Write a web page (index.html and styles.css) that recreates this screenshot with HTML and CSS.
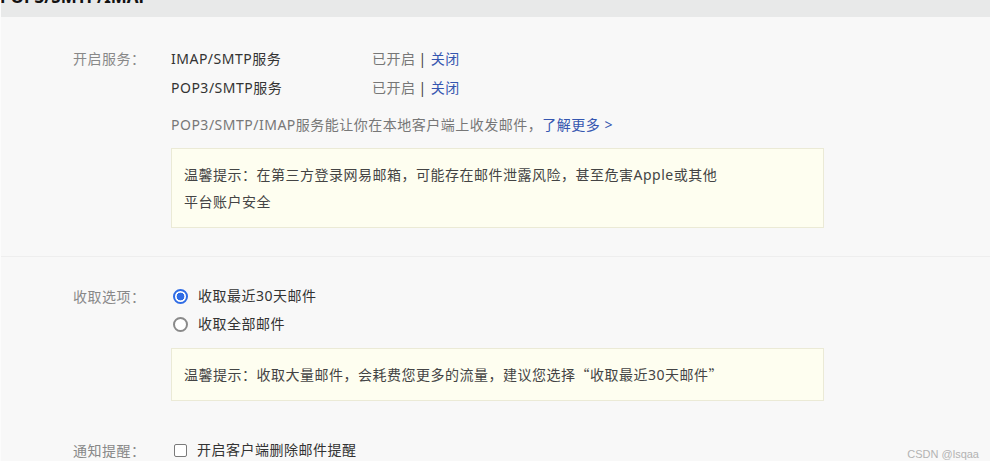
FILE: index.html
```html
<!DOCTYPE html>
<html lang="zh-CN">
<head>
    <meta charset="UTF-8">
    <title>POP3/SMTP/IMAP</title>
    <link rel="stylesheet" href="styles.css">
</head>
<body>
    <div class="page">
        <div class="head-bar">
            <h3 class="head-title">POP3/SMTP/IMAP</h3>
        </div>

        <div class="section section-service">
            <div class="row">
                <div class="row-label">开启服务：</div>
                <div class="row-body">
                    <div class="service-line">
                        <span class="service-name">IMAP/SMTP服务</span>
                        <span class="service-state">已开启<i class="sep">|</i><a href="#">关闭</a></span>
                    </div>
                    <div class="service-line">
                        <span class="service-name">POP3/SMTP服务</span>
                        <span class="service-state">已开启<i class="sep">|</i><a href="#">关闭</a></span>
                    </div>
                    <p class="service-desc">POP3/SMTP/IMAP服务能让你在本地客户端上收发邮件，<a href="#">了解更多 &gt;</a></p>
                    <div class="tip-box">
                        温馨提示：在第三方登录网易邮箱，可能存在邮件泄露风险，甚至危害Apple或其他<br>平台账户安全
                    </div>
                </div>
            </div>
        </div>

        <div class="section section-fetch">
            <div class="row">
                <div class="row-label">收取选项：</div>
                <div class="row-body">
                    <label class="option">
                        <span class="radio checked"></span>收取最近30天邮件
                    </label>
                    <label class="option">
                        <span class="radio"></span>收取全部邮件
                    </label>
                    <div class="tip-box tip-short">
                        温馨提示：收取大量邮件，会耗费您更多的流量，建议您选择<span class="cjk">“</span>收取最近30天邮件<span class="cjk">”</span>
                    </div>
                </div>
            </div>

            <div class="row row-notify">
                <div class="row-label">通知提醒：</div>
                <div class="row-body">
                    <label class="option">
                        <span class="checkbox"></span>开启客户端删除邮件提醒
                    </label>
                </div>
            </div>
        </div>

        <div class="watermark">CSDN @lsqaa</div>
    </div>
</body>
</html>
```

FILE: styles.css
```css
html, body {
    margin: 0;
    padding: 0;
}
body {
    background: #f8f8f8;
    font-family: "Noto Sans", "Noto Sans CJK SC", sans-serif;
    font-size: 14px;
    letter-spacing: 0.5px;
    color: #333;
    overflow: hidden;
}
a {
    color: #3556b0;
    text-decoration: none;
}
.cjk {
    font-family: "Noto Sans CJK SC", sans-serif;
}

.page {
    position: relative;
    width: 990px;
    height: 461px;
    overflow: hidden;
    border-left: 1px solid #fcfcfc;
    box-sizing: border-box;
}

.head-bar {
    height: 17px;
    background: #e8e9e9;
    overflow: hidden;
}
.head-title {
    margin: -13px 0 0 -1px;
    font-size: 17px;
    line-height: 20px;
    font-weight: bold;
    letter-spacing: 0;
    color: #111;
}

.section {
    padding-left: 72px;
}
.section-service {
    padding-top: 27px;
    padding-bottom: 28px;
    border-bottom: 1px solid #eeeeee;
}
.section-fetch {
    padding-top: 25px;
}

.row {
    display: flex;
    line-height: 29px;
}
.row-label {
    width: 98px;
    flex-shrink: 0;
    color: #888;
}
.row-body {
    flex: 1;
}

.service-line {
    display: flex;
}
.service-name {
    width: 201px;
    color: #333;
}
.service-state {
    color: #777;
}
.sep {
    font-style: normal;
    margin: 0 4px 0 3px;
    color: #444;
}

.service-desc {
    margin: 8px 0 0;
    color: #777;
}

.tip-box {
    width: 627px;
    margin-top: 9px;
    padding: 12px 12px;
    line-height: 27px;
    background: #fefef0;
    border: 1px solid #ebead6;
    color: #444;
}
.tip-short {
    margin-top: 10px;
}

.option {
    display: flex;
    align-items: center;
    line-height: 28px;
    color: #333;
}
.radio {
    width: 11px;
    height: 11px;
    margin: 0 10px 0 2px;
    border: 2px solid #8a8a8a;
    border-radius: 50%;
    background: #fff;
    box-sizing: content-box;
}
.radio.checked {
    border-color: #2f6ce5;
    background: radial-gradient(circle, #2f6ce5 0 3.6px, #fff 4.2px);
}
.checkbox {
    width: 11px;
    height: 11px;
    margin: 0 10px 0 3px;
    border: 1.6px solid #7a7a7a;
    border-radius: 2px;
    background: #fff;
}

.row-notify {
    margin-top: 35px;
}

.watermark {
    position: absolute;
    right: 11px;
    bottom: 1px;
    font-family: "Liberation Sans", Arial, sans-serif;
    font-size: 11px;
    letter-spacing: 0;
    color: #b3b3b3;
}
```
